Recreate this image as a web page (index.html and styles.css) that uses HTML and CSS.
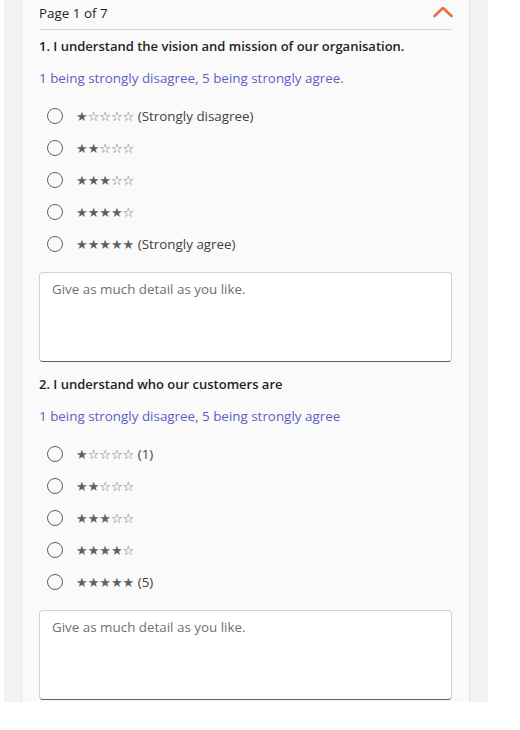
FILE: index.html
```html
<!DOCTYPE html>
<html>
<head>
<meta charset="utf-8">
<link rel="stylesheet" href="styles.css">
</head>
<body>
<div class="pane">
  <div class="card">
    <div class="header">
      <span class="page">Page 1 of 7</span>
      <svg class="chev" width="20" height="12" viewBox="0 0 20 12"><path d="M1.5 10 L10 2 L18.5 10" fill="none" stroke="#e9703b" stroke-width="2.6" stroke-linecap="round" stroke-linejoin="round"/></svg>
    </div>
    <div class="questions">
      <div class="question">
        <div class="title">1. I understand the vision and mission of our organisation.</div>
        <div class="subtitle">1 being strongly disagree, 5 being strongly agree.</div>
        <div class="options">
          <div class="option"><span class="radio"></span><span class="label"><span class="stars">★☆☆☆☆</span> (Strongly disagree)</span></div>
          <div class="option"><span class="radio"></span><span class="label"><span class="stars">★★☆☆☆</span></span></div>
          <div class="option"><span class="radio"></span><span class="label"><span class="stars">★★★☆☆</span></span></div>
          <div class="option"><span class="radio"></span><span class="label"><span class="stars">★★★★☆</span></span></div>
          <div class="option"><span class="radio"></span><span class="label"><span class="stars">★★★★★</span> (Strongly agree)</span></div>
        </div>
        <div class="textarea"><span class="placeholder">Give as much detail as you like.</span></div>
      </div>
      <div class="question">
        <div class="title">2. I understand who our customers are</div>
        <div class="subtitle">1 being strongly disagree, 5 being strongly agree</div>
        <div class="options">
          <div class="option"><span class="radio"></span><span class="label"><span class="stars">★☆☆☆☆</span> (1)</span></div>
          <div class="option"><span class="radio"></span><span class="label"><span class="stars">★★☆☆☆</span></span></div>
          <div class="option"><span class="radio"></span><span class="label"><span class="stars">★★★☆☆</span></span></div>
          <div class="option"><span class="radio"></span><span class="label"><span class="stars">★★★★☆</span></span></div>
          <div class="option"><span class="radio"></span><span class="label"><span class="stars">★★★★★</span> (5)</span></div>
        </div>
        <div class="textarea"><span class="placeholder">Give as much detail as you like.</span></div>
      </div>
    </div>
  </div>
</div>
</body>
</html>
```
FILE: styles.css
```css
html, body {
  margin: 0;
  padding: 0;
  background: #ffffff;
}
body {
  font-family: "Open Sans", "Noto Sans", sans-serif;
  font-size: 13.4px;
  color: #242424;
}
.pane {
  margin-left: 4px;
  width: 484px;
  height: 702px;
  background: #f3f3f3;
  overflow: hidden;
}
.card {
  margin-left: 17px;
  width: 413px;
  padding: 0 17px;
  height: 702px;
  background: #fafafa;
  border-left: 1px solid #e8e8e8;
  border-right: 1px solid #e3e3e3;
  overflow: hidden;
}
.header {
  display: flex;
  justify-content: space-between;
  align-items: center;
  height: 29px;
  border-bottom: 1px solid #d6d6d6;
}
.page {
  line-height: 20px;
  margin-top: -3px;
  color: #242424;
}
.chev {
  margin-top: -5px;
  margin-right: -1px;
}
.questions {
  display: flex;
  flex-direction: column;
  gap: 12px;
  padding-top: 6px;
}
.question {
  display: flex;
  flex-direction: column;
  gap: 12px;
}
.title {
  font-size: 13px;
  font-weight: 600;
  line-height: 20px;
  color: #242424;
}
.subtitle {
  line-height: 20px;
  color: #5b5fc7;
}
.options {
  display: flex;
  flex-direction: column;
}
.option {
  height: 32px;
  display: flex;
  align-items: center;
  padding-left: 8px;
}
.radio {
  width: 14px;
  height: 14px;
  border: 1px solid #616161;
  border-radius: 50%;
  flex: none;
}
.label {
  margin-left: 13px;
  color: #424242;
  line-height: 20px;
}
.stars {
  font-family: "DejaVu Sans", sans-serif;
  font-size: 13px;
  color: #616161;
}
.textarea {
  height: 82px;
  background: #ffffff;
  border: 1px solid #d1d1d1;
  border-bottom-color: #616161;
  border-radius: 4px;
  padding: 6px 12px 0;
}
.placeholder {
  line-height: 20px;
  color: #707070;
}
```
